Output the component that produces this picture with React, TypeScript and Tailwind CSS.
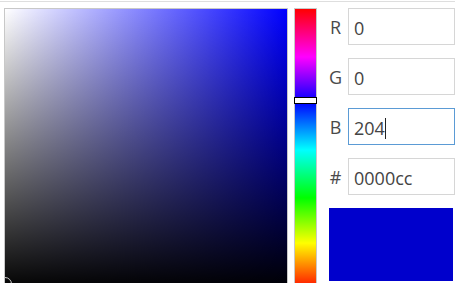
const rows = [
  { label: "R", value: "0", focused: false },
  { label: "G", value: "0", focused: false },
  { label: "B", value: "204", focused: true },
  { label: "#", value: "0000cc", focused: false },
];

const App = () => {
  return (
    <div
      className="w-[455px] h-[283px] overflow-hidden bg-white"
      style={{ fontFamily: '"Open Sans", "Noto Sans", sans-serif' }}
    >
      <div className="mt-px border-t border-[#dedede] flex pt-[6px] pl-1 gap-[6px]">
        {/* saturation / value square */}
        <div className="relative w-[284px] h-[284px] shrink-0 border border-[#c8c8c8] overflow-hidden bg-[linear-gradient(to_top,#000,rgba(0,0,0,0)),linear-gradient(to_right,#fff,#00f)]">
          <div className="absolute left-[-7px] top-[268px] w-[14px] h-[14px] rounded-full border border-[#d0d0d0]" />
        </div>

        {/* hue bar */}
        <div className="relative w-[23px] h-[284px] shrink-0 border border-[#c8c8c8] bg-[linear-gradient(to_bottom,#f00,#f0f_17%,#00f_33%,#0ff_50%,#0f0_67%,#ff0_83%,#f00)]">
          <div className="absolute left-[-1px] top-[88px] w-[23px] h-[7px] border border-black bg-white" />
        </div>

        {/* channel inputs */}
        <div className="flex flex-col gap-[13px] flex-1">
          {rows.map((row) => (
            <div key={row.label} className="flex items-center h-[37px]">
              <div className="w-[25px] pt-[2px] text-center text-[18px] text-[#4a4a4a]">{row.label}</div>
              <div
                className={
                  "flex-1 h-[37px] flex items-center pl-[5px] pt-[3px] text-[18px] text-[#444] border " +
                  (row.focused ? "border-[#5b9bd5]" : "border-[#d6d6d6]")
                }
              >
                {row.value}
                {row.focused && <span className="inline-block w-px h-[21px] bg-[#222]" />}
              </div>
            </div>
          ))}
          <div className="ml-[6px] mr-[2px] h-[73px] bg-[#0000cc]" />
        </div>
      </div>
    </div>
  );
};

export default App;
